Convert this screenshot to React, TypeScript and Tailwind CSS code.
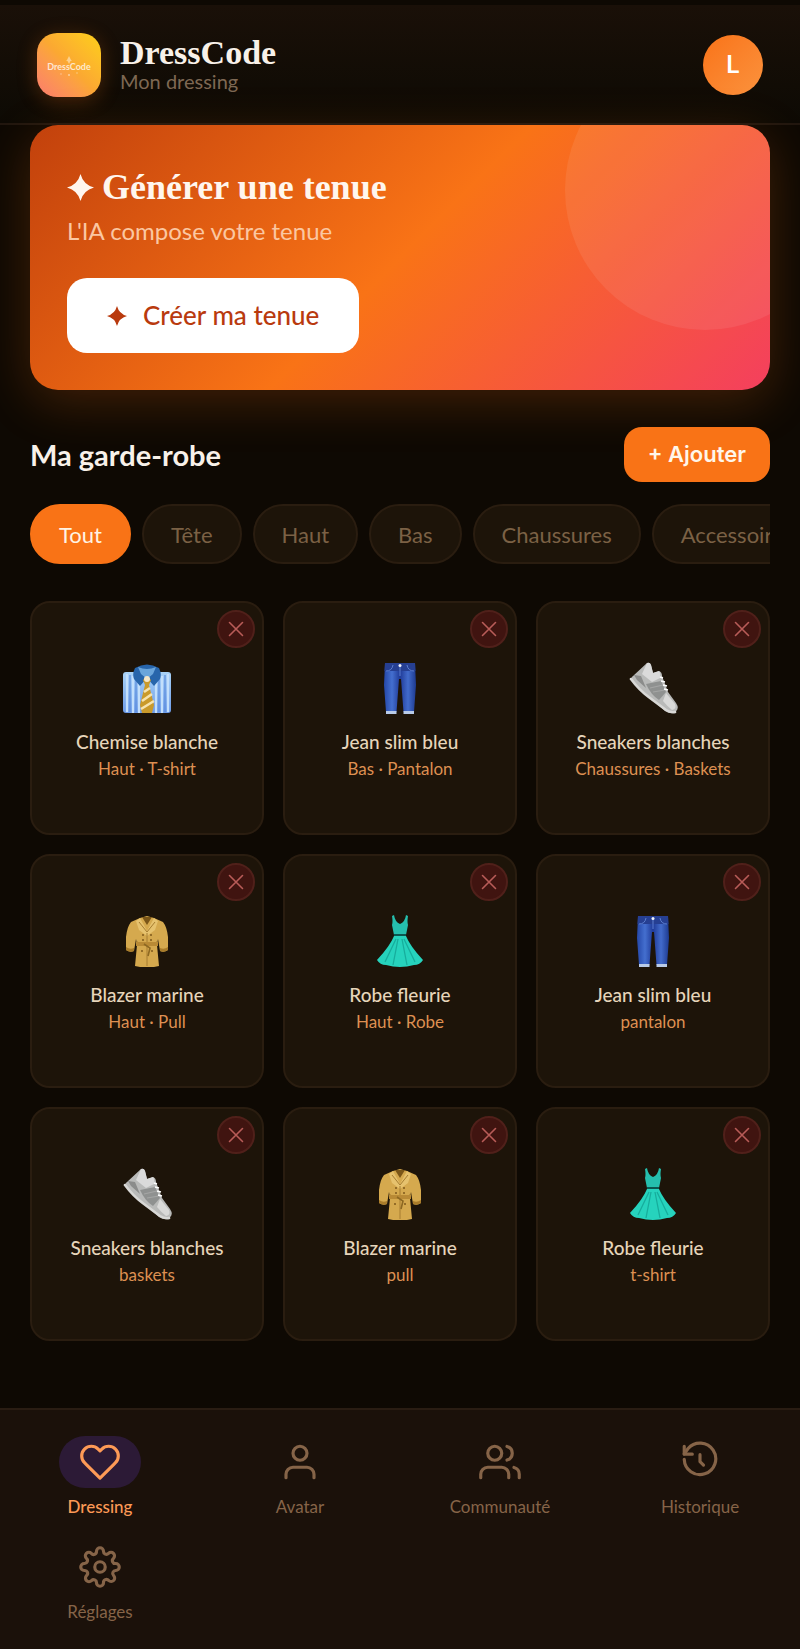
import { useState } from 'react'
import clsx from 'clsx'

type Garment = 'shirt' | 'jeans' | 'sneaker' | 'coat' | 'dress'

const FILTERS = ['Tout', 'Tête', 'Haut', 'Bas', 'Chaussures', 'Accessoires']

const ITEMS: { id: number; name: string; detail: string; garment: Garment }[] = [
  { id: 1, name: 'Chemise blanche', detail: 'Haut · T-shirt', garment: 'shirt' },
  { id: 2, name: 'Jean slim bleu', detail: 'Bas · Pantalon', garment: 'jeans' },
  { id: 3, name: 'Sneakers blanches', detail: 'Chaussures · Baskets', garment: 'sneaker' },
  { id: 4, name: 'Blazer marine', detail: 'Haut · Pull', garment: 'coat' },
  { id: 5, name: 'Robe fleurie', detail: 'Haut · Robe', garment: 'dress' },
  { id: 6, name: 'Jean slim bleu', detail: 'pantalon', garment: 'jeans' },
  { id: 7, name: 'Sneakers blanches', detail: 'baskets', garment: 'sneaker' },
  { id: 8, name: 'Blazer marine', detail: 'pull', garment: 'coat' },
  { id: 9, name: 'Robe fleurie', detail: 't-shirt', garment: 'dress' },
]

const GARMENTS: Record<Garment, React.ReactNode> = {
  shirt: (
    <>
      <defs>
        <linearGradient id="shirt-body" x1="0" y1="0" x2="0" y2="1">
          <stop offset="0" stopColor="#a9d3f7" />
          <stop offset="1" stopColor="#6d9be8" />
        </linearGradient>
      </defs>
      <rect x="2" y="10" width="48" height="41" rx="3" fill="url(#shirt-body)" />
      <path d="M6 12v38M12 14v37M18 17v34M35 17v34M41 14v37M47 12v38" stroke="#c3dffb" strokeWidth="2.2" />
      <path d="M9 13v37M15 17v33M38 17v33M44 13v37" stroke="#5a8cdc" strokeWidth="1.2" />
      <path d="M14 6Q26-1 38 6q3 6 1 11l-6 7-7-8-7 8-6-7q-2-5 1-11z" fill="#2765ab" />
      <path d="M17 5q9 4 18 0l-3 7-6 5-6-5z" fill="#6aa5db" />
      <path d="m26 14 4 4-2 5 5 20-2 8H21l-2-8 5-20-2-5z" fill="#c99a2b" />
      <path d="m23 30 6-4M21 39l10-7M20 47l13-8" stroke="#f6e3ae" strokeWidth="2.6" />
      <circle cx="26" cy="17" r="3" fill="#f4e6c8" />
    </>
  ),
  jeans: (
    <>
      <defs>
        <linearGradient id="denim" x1="0" y1="0" x2="1" y2="0">
          <stop offset="0" stopColor="#2447a8" />
          <stop offset=".25" stopColor="#446fcf" />
          <stop offset=".5" stopColor="#1f3a98" />
          <stop offset=".75" stopColor="#426bcb" />
          <stop offset="1" stopColor="#1d3a90" />
        </linearGradient>
      </defs>
      <path d="M11 1h30l1 22-2 27H29.500L27 17h-2l-2.500 33H12L10 23z" fill="url(#denim)" />
      <path d="M11 1h30l.5 8H10.500z" fill="#263f92" />
      <path d="M12 9q6 0 7-6M40 9q-6 0-7-6M26 4v10" stroke="#5c7fd0" strokeWidth="1" fill="none" />
      <path d="M12 49h10.500v3H12zM29.500 49H40v3H29.500z" fill="#b9cbe8" />
      <circle cx="26" cy="3.500" r="1.500" fill="#f2f4fa" />
    </>
  ),
  sneaker: (
    <g transform="translate(2 0)">
      <path d="M18 1q3-1 4 2l2 8 6-2q3 1 3 5l6 16 8 11q4 6-1 9-4 3-10-1L20 35 3 19q-2-3 1-5z" fill="#b9bab9" />
      <path d="M18 1q3-1 4 2l2 8 6-2q2 2 1 7l-8 4-10-8z" fill="#dadada" />
      <path d="m17 22 15-3 5 11-7 8q-8-5-13-16z" fill="#8f9190" />
      <path d="m21 26 13-3M24 30l12-2" stroke="#a5a6a5" strokeWidth="1.200" />
      <path d="m5 13 7 1 5 12-9-8z" fill="#8b8c8b" />
      <path d="m37 31 9 11q2 5-3 6-5-4-9-9z" fill="#d9d9d8" />
      <path d="M2 17q8 11 19 19l16 12q5 3 9 2" stroke="#d8d8d6" strokeWidth="2.600" fill="none" strokeLinecap="round" />
      <path d="m31 15 3 1M32 19l4 1M34 23l4 1M35 27l4 1" stroke="#fff" strokeWidth="1.500" />
    </g>
  ),
  coat: (
    <>
      <path d="M19 3 10 7Q6 12 5 22v13q4 3 8 1l2-12 1 6-2 21q12 3 24 0l-2-21 1-6 2 12q4 2 8-1V22Q46 12 42 7l-9-4-7-2z" fill="#d5a94e" />
      <path d="M5 32q4 3 8 1v3q-4 2-8-1zM39 33q4 2 8-1v3q-4 3-8 1z" fill="#a97c2a" />
      <path d="m19 3 7 13 7-13 4 3-3 9-8 6-8-6-3-9z" fill="#e6c26e" />
      <path d="M21 2h10l-5 8z" fill="#7a5618" />
      <path d="m18 7 8 10 8-10M16 26v5M36 26v5M26 18v33" stroke="#a67d30" strokeWidth="1" fill="none" />
      <path d="M15 27h22v4H15z" fill="#b98a35" />
      <path d="m23 29 6 4-2 8" stroke="#8d6822" strokeWidth="1.600" fill="none" />
      <g fill="#7e5a1c">
        <circle cx="22" cy="20" r="1" />
        <circle cx="30" cy="20" r="1" />
        <circle cx="22" cy="25" r="1" />
        <circle cx="30" cy="25" r="1" />
        <circle cx="21" cy="36" r="1" />
        <circle cx="31" cy="36" r="1" />
      </g>
    </>
  ),
  dress: (
    <>
      <path d="M20 0q1 7 6 9 5-2 6-9l2 1q-1 6 0 9-1 5-2 10h-12q-1-5-2-10 1-3 0-9z" fill="#25bfae" />
      <path d="M20 21h12q4 10 17 24-3 5-9 5-14 4-28 0-6 0-9-5Q16 31 20 21z" fill="#26d3bd" />
      <path d="M22 24 11 47M24 24l-5 26M28 24l5 26M30 24l11 23" stroke="#17ad9c" strokeWidth="1.300" />
      <path d="M20 19h12v2H20z" fill="#0b5750" />
    </>
  ),
}

const NAV = [
  {
    label: 'Dressing',
    icon: (
      <path d="M20.840 4.610a5.500 5.500 0 0 0-7.780 0L12 5.670l-1.060-1.060a5.500 5.500 0 0 0-7.780 7.780l1.060 1.060L12 21.230l7.780-7.780 1.060-1.060a5.500 5.500 0 0 0 0-7.780z" />
    ),
  },
  {
    label: 'Avatar',
    icon: (
      <>
        <path d="M20 21v-2a4 4 0 0 0-4-4H8a4 4 0 0 0-4 4v2" />
        <circle cx="12" cy="7" r="4" />
      </>
    ),
  },
  {
    label: 'Communauté',
    icon: (
      <>
        <path d="M17 21v-2a4 4 0 0 0-4-4H5a4 4 0 0 0-4 4v2" />
        <circle cx="9" cy="7" r="4" />
        <path d="M23 21v-2a4 4 0 0 0-3-3.870M16 3.130a4 4 0 0 1 0 7.750" />
      </>
    ),
  },
  {
    label: 'Historique',
    icon: (
      <>
        <path d="M12 7.800v4l2 2" />
        <path d="M3 10.500A9 9 0 1 0 5.200 4.300L3 7.400" />
        <path d="M3 3v4.500h4.600" />
      </>
    ),
  },
  {
    label: 'Réglages',
    icon: (
      <>
        <circle cx="12" cy="12" r="3" />
        <path d="M19.400 15a1.650 1.650 0 0 0 .33 1.820l.06.06a2 2 0 0 1-2.830 2.830l-.06-.06a1.650 1.650 0 0 0-2.900 1.170V21a2 2 0 0 1-4 0v-.09a1.650 1.650 0 0 0-2.820-1.180l-.06.06a2 2 0 0 1-2.830-2.830l.06-.06A1.650 1.650 0 0 0 3.090 14H3a2 2 0 0 1 0-4h.09a1.650 1.650 0 0 0 1.180-2.900l-.06-.06a2 2 0 0 1 2.830-2.830l.06.06A1.650 1.650 0 0 0 10 3.090V3a2 2 0 0 1 4 0v.09a1.650 1.650 0 0 0 2.820 1.180l.06-.06a2 2 0 0 1 2.830 2.830l-.06.06A1.650 1.650 0 0 0 20.910 10H21a2 2 0 0 1 0 4h-.09a1.650 1.650 0 0 0-1.510 1z" />
      </>
    ),
  },
]

const Sparkle = ({ className }: { className: string }) => (
  <svg viewBox="0 0 24 24" className={className} fill="currentColor" aria-hidden="true">
    <path d="M12 0q2.500 9.500 12 12-9.500 2.500-12 12-2.500-9.500-12-12 9.500-2.500 12-12z" />
  </svg>
)

const Header = () => (
  <header className="mt-[5px] flex items-center border-b-2 border-[#21170f] bg-linear-to-b from-[#1a1008] to-[#0d0a04] px-[37px] pt-7 pb-[26px]">
    <div className="flex size-16 items-center justify-center rounded-[20px] bg-linear-to-tr from-[#fb7b6c] via-[#fba832] to-[#fdd015] shadow-[0_4px_20px_rgba(249,115,22,0.25)]">
      <svg viewBox="0 0 64 64" className="size-full" aria-label="DressCode" role="img">
        <path d="M32 23l2 4-2 4-2-4zM29 28l3-3 3 3" fill="#fff" fillOpacity=".45" />
        <text x="32" y="37" textAnchor="middle" fontFamily="Lato, sans-serif" fontWeight="700" fontSize="9" fill="#fff" fillOpacity=".75">
          DressCode
        </text>
        <g fill="#fff" fillOpacity=".5">
          <circle cx="32" cy="42" r="1" />
          <circle cx="24" cy="41" r=".7" />
          <circle cx="40" cy="40" r=".7" />
        </g>
      </svg>
    </div>
    <div className="ml-[19px] flex-1">
      <h1 className="font-['Liberation_Serif',serif] text-[34px] leading-8 font-bold text-[#f8f1e9]">
        DressCode
      </h1>
      <p className="text-[20px] leading-6 text-[#7e6853]">Mon dressing</p>
    </div>
    <button
      aria-label="Profil"
      className="size-[60px] rounded-full bg-linear-to-br from-[#f97316] to-[#fb923c] font-['Inter',sans-serif] text-[24px] font-semibold text-white"
    >
      L
    </button>
  </header>
)

const Hero = () => (
  <section className="relative overflow-hidden rounded-[28px] bg-[linear-gradient(135deg,#c2410c_0%,#f97316_50%,#f43f5e_100%)] px-[37px] pt-[42px] pb-[37px]">
    <div className="absolute -top-[75px] -right-[75px] size-[280px] rounded-full bg-white/8" />
    <h2 className="flex items-center gap-2 font-['Liberation_Serif',serif] text-[36px] leading-10 font-bold text-[#fff6ee]">
      <Sparkle className="size-[27px]" />
      Générer une tenue
    </h2>
    <p className="mt-2 text-[24px] leading-8 text-[#fbc7a2]">L'IA compose votre tenue</p>
    <button className="mt-[31px] flex h-[75px] items-center gap-4 rounded-[20px] bg-white px-10 text-[26px] font-medium text-[#b93a0e]">
      <Sparkle className="size-5" />
      Créer ma tenue
    </button>
  </section>
)

const ItemCard = ({ name, detail, garment }: (typeof ITEMS)[number]) => (
  <li className="relative flex aspect-square flex-col items-center justify-center rounded-[20px] border-2 border-[#2a1d10] bg-[#1d1409] pt-2">
    <button
      aria-label={`Supprimer ${name}`}
      className="absolute top-[7px] right-[7px] flex size-[38px] items-center justify-center rounded-full border-2 border-[#50201a] bg-[#401410] text-[#b85c58]"
    >
      <svg viewBox="0 0 16 16" className="size-4" stroke="currentColor" strokeWidth="1.600" strokeLinecap="round">
        <path d="M1.500 1.500l13 13M14.500 1.500l-13 13" />
      </svg>
    </button>
    <svg viewBox="0 0 52 52" className="size-[52px]" aria-hidden="true">
      {GARMENTS[garment]}
    </svg>
    <h3 className="mt-[14px] text-[19px] leading-7 font-medium text-[#e6d5ba]">{name}</h3>
    <p className="text-[17px] leading-[26px] text-[#dd9052]">{detail}</p>
  </li>
)

const BottomNav = () => (
  <nav className="grid grid-cols-4 gap-y-[6px] border-t-2 border-[#2a1d13] bg-[#1b110a] pt-[26px] pb-3">
    {NAV.map(({ label, icon }, index) => (
      <a
        key={label}
        href="#"
        className={clsx(
          'flex flex-col items-center gap-[7px] pb-4',
          index === 0 ? 'text-[#fd9a56]' : 'text-[#866448]',
        )}
      >
        <span
          className={clsx(
            'flex h-[52px] w-[82px] items-center justify-center rounded-[26px]',
            index === 0 && 'bg-[#2c1a36]',
          )}
        >
          <svg
            viewBox="0 0 24 24"
            className="size-[42px]"
            fill="none"
            stroke="currentColor"
            strokeWidth="1.800"
            strokeLinecap="round"
            strokeLinejoin="round"
            aria-hidden="true"
          >
            {icon}
          </svg>
        </span>
        <span className={clsx('text-[17px] leading-6', index === 0 && 'font-medium')}>
          {label}
        </span>
      </a>
    ))}
  </nav>
)

const App = () => {
  const [filter, setFilter] = useState('Tout')

  return (
    <div className="flex min-h-screen flex-col bg-[#0e0903] font-['Lato','Noto_Sans',sans-serif]">
      <Header />

      <main className="flex-1 px-[30px] pb-[67px]">
        <div className="rounded-[28px] shadow-[0_12px_50px_rgba(249,115,22,0.22)]">
          <Hero />
        </div>

        <div className="mt-[37px] flex items-center justify-between">
          <h2 className="text-[29px] leading-9 font-bold text-[#f8f1e9]">Ma garde-robe</h2>
          <button className="h-[55px] rounded-[18px] bg-[#f97316] px-6 font-['Inter',sans-serif] text-[22px] font-semibold text-[#fff6ea]">
            + Ajouter
          </button>
        </div>

        <div className="mt-[22px] flex gap-[11px] overflow-x-auto [scrollbar-width:none]">
          {FILTERS.map(name => (
            <button
              key={name}
              onClick={() => setFilter(name)}
              className={clsx(
                'h-[60px] shrink-0 rounded-[30px] border-2 px-[27px] text-[22px]',
                name === filter
                  ? 'border-[#f97316] bg-[#f97316] text-[#fff3e4]'
                  : 'border-[#2a1d10] bg-[#1d1409] text-[#7b6145]',
              )}
            >
              {name}
            </button>
          ))}
        </div>

        <ul className="mt-[37px] grid grid-cols-3 gap-[19px]">
          {ITEMS.map(item => (
            <ItemCard key={item.id} {...item} />
          ))}
        </ul>
      </main>

      <BottomNav />
    </div>
  )
}

export default App
